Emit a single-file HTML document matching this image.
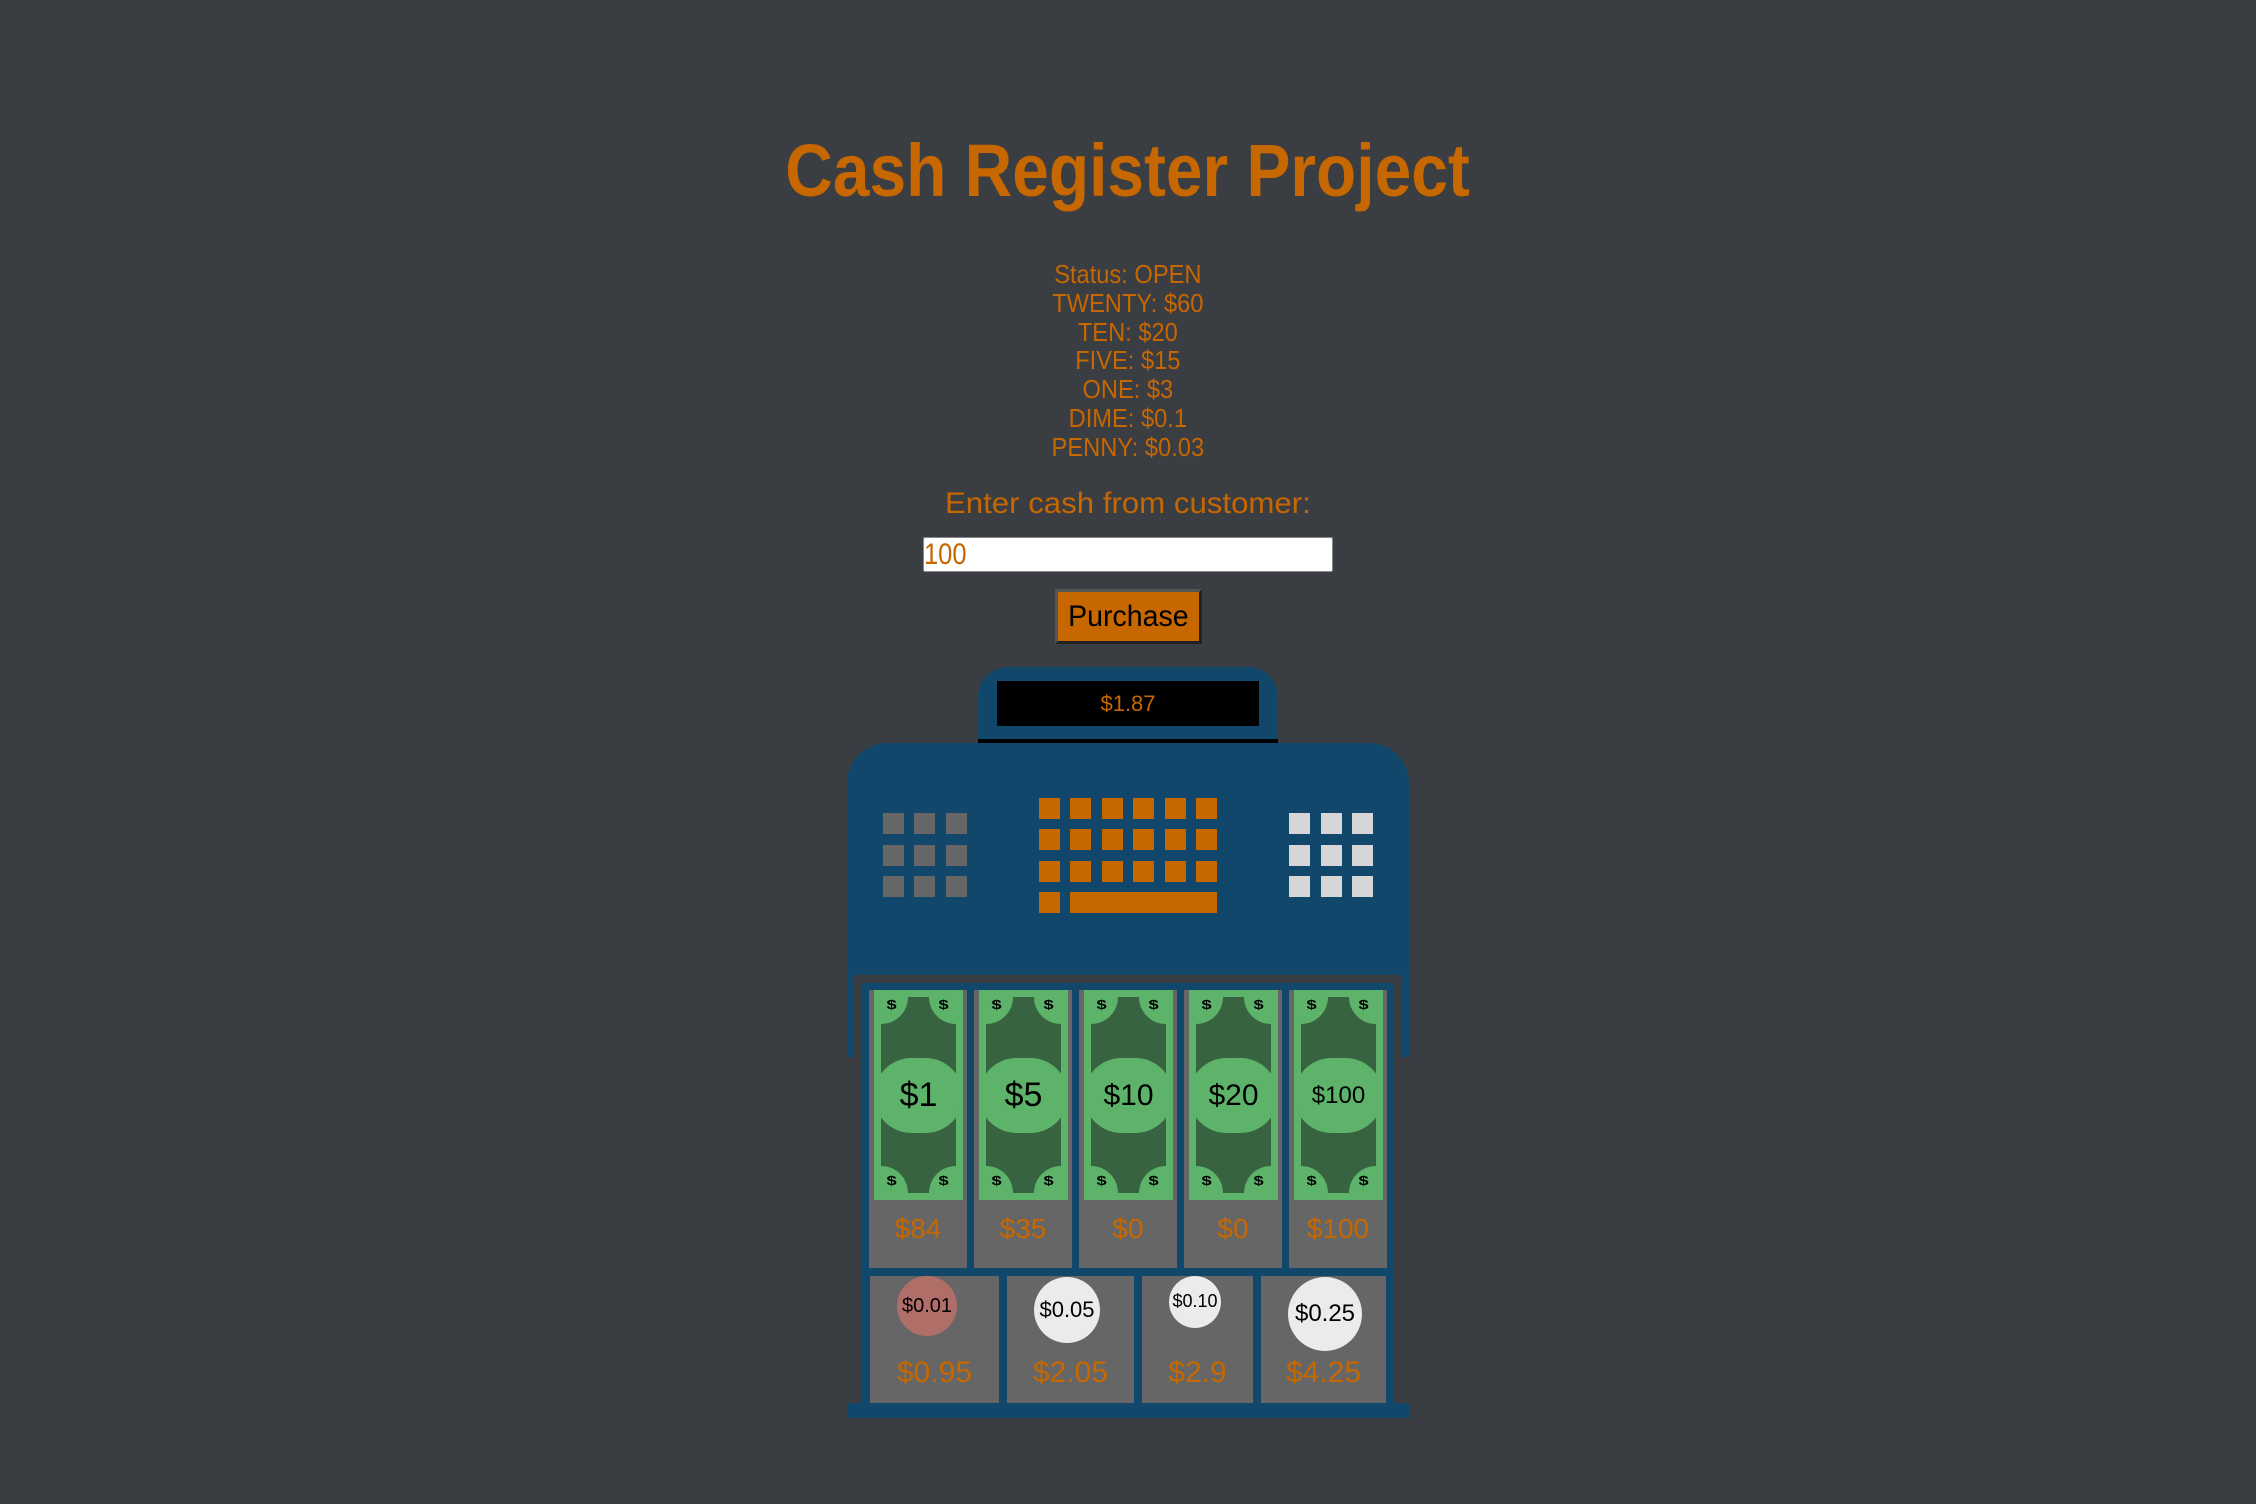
<!DOCTYPE html>
<html><head><meta charset="utf-8"><style>
*{margin:0;padding:0;box-sizing:border-box}
body{width:2256px;height:1504px;background:#3a3d42;position:relative;overflow:hidden;font-family:"Liberation Sans",sans-serif;color:#c76700}
.a{position:absolute}
.c{position:absolute;left:0;width:2256px;text-align:center;white-space:nowrap}
.c span{display:inline-block}
.k{position:absolute;width:21px;height:21px}
.slot{position:absolute;background:#666;top:990px;width:98px;height:278px}
.bill{position:absolute;left:5px;top:0;width:89px;height:210px;background:#5db36a;overflow:hidden}
.inner{position:absolute;left:7px;top:7px;width:75px;height:196px;background:#386340;overflow:hidden}
.cr{position:absolute;width:54px;height:54px;border-radius:50%;background:#5db36a}
.ov{position:absolute;left:0;top:68px;width:89px;height:75px;border-radius:38px;background:#5db36a;text-align:center;line-height:75px;color:#000;font-size:34px}
.ds{position:absolute;font-size:13px;color:#000;font-weight:bold;transform:scaleX(1.4)}
.lab{position:absolute;left:0;width:98px;top:224px;text-align:center;font-size:28px;line-height:30px;color:#c76700}
.cs{position:absolute;background:#666;top:1276px;height:127px}
.coin{position:absolute;border-radius:50%;text-align:center;color:#000}
.cl{position:absolute;left:0;right:0;top:81px;text-align:center;font-size:30px;line-height:32px;color:#c76700}
</style></head><body>
<div class="c" style="top:126px;font-size:74px;font-weight:bold;line-height:90px"><span style="transform:scaleX(0.89)">Cash Register Project</span></div>
<div class="c" style="top:260px;font-size:26px;line-height:28.8px"><span style="transform:scaleX(0.91)">Status: OPEN<br>TWENTY: $60<br>TEN: $20<br>FIVE: $15<br>ONE: $3<br>DIME: $0.1<br>PENNY: $0.03</span></div>
<div class="c" style="top:487px;font-size:30px;line-height:34px"><span style="transform:scaleX(1.04)">Enter cash from customer:</span></div>
<div class="a" style="left:923px;top:537px;width:410px;height:35px;background:#fff;border:1px solid #888;border-radius:2px;font-size:30px;line-height:33px"><span style="display:inline-block;transform:scaleX(0.85);transform-origin:left">100</span></div>
<div class="a" style="left:1055px;top:589px;width:147px;height:55px;background:#c76700;border:3px solid #222;border-top-color:#555;border-left-color:#555;color:#000;font-size:30px;line-height:49px;text-align:center"><span style="display:inline-block;transform:scaleX(0.95)">Purchase</span></div>

<div class="a" style="left:978px;top:667px;width:300px;height:76px;background:#11476a;border-radius:30px 30px 0 0;border-bottom:4px solid #000"></div>
<div class="a" style="left:997px;top:681px;width:262px;height:45px;background:#000;color:#c76700;font-size:22px;line-height:45px;text-align:center">$1.87</div>
<div class="a" style="left:847px;top:743px;width:562px;height:314px;background:#11476a;border-radius:40px 40px 0 0"></div>
<div class="a" style="left:854px;top:975px;width:548px;height:82px;background:#3a3d42"></div>
<div class="a" style="left:862px;top:983px;width:532px;height:425px;background:#11476a"></div>
<div class="a" style="left:847px;top:1403px;width:562px;height:15px;background:#11476a"></div>

<!-- keys -->
<div class="k" style="left:883px;top:813px;background:#666"></div><div class="k" style="left:914px;top:813px;background:#666"></div><div class="k" style="left:946px;top:813px;background:#666"></div>
<div class="k" style="left:883px;top:845px;background:#666"></div><div class="k" style="left:914px;top:845px;background:#666"></div><div class="k" style="left:946px;top:845px;background:#666"></div>
<div class="k" style="left:883px;top:876px;background:#666"></div><div class="k" style="left:914px;top:876px;background:#666"></div><div class="k" style="left:946px;top:876px;background:#666"></div>
<div class="k" style="left:1289px;top:813px;background:#d6d6d6"></div><div class="k" style="left:1321px;top:813px;background:#d6d6d6"></div><div class="k" style="left:1352px;top:813px;background:#d6d6d6"></div>
<div class="k" style="left:1289px;top:845px;background:#d6d6d6"></div><div class="k" style="left:1321px;top:845px;background:#d6d6d6"></div><div class="k" style="left:1352px;top:845px;background:#d6d6d6"></div>
<div class="k" style="left:1289px;top:876px;background:#d6d6d6"></div><div class="k" style="left:1321px;top:876px;background:#d6d6d6"></div><div class="k" style="left:1352px;top:876px;background:#d6d6d6"></div>
<div class="a" style="left:1039px;top:798px;width:178px;height:116px;background:
linear-gradient(90deg,#c76700 0 21px,transparent 21px 31px,#c76700 31px 52px,transparent 52px 63px,#c76700 63px 84px,transparent 84px 94px,#c76700 94px 115px,transparent 115px 126px,#c76700 126px 147px,transparent 147px 157px,#c76700 157px 178px) 0 0/178px 21px no-repeat,
linear-gradient(90deg,#c76700 0 21px,transparent 21px 31px,#c76700 31px 52px,transparent 52px 63px,#c76700 63px 84px,transparent 84px 94px,#c76700 94px 115px,transparent 115px 126px,#c76700 126px 147px,transparent 147px 157px,#c76700 157px 178px) 0 31px/178px 21px no-repeat,
linear-gradient(90deg,#c76700 0 21px,transparent 21px 31px,#c76700 31px 52px,transparent 52px 63px,#c76700 63px 84px,transparent 84px 94px,#c76700 94px 115px,transparent 115px 126px,#c76700 126px 147px,transparent 147px 157px,#c76700 157px 178px) 0 63px/178px 21px no-repeat,
linear-gradient(90deg,#c76700 0 21px,transparent 21px 31px,#c76700 31px 178px) 0 94px/178px 21px no-repeat"></div>

<!-- bills -->
<div class="slot" style="left:869px"><div class="bill"><div class="inner"><div class="cr" style="left:-27px;top:-27px"></div><div class="cr" style="left:48px;top:-27px"></div><div class="cr" style="left:-27px;top:169px"></div><div class="cr" style="left:48px;top:169px"></div></div><span class="ds" style="left:14px;top:7px">$</span><span class="ds" style="left:66px;top:7px">$</span><span class="ds" style="left:14px;top:183px">$</span><span class="ds" style="left:66px;top:183px">$</span><div class="ov">$1</div></div><div class="lab">$84</div></div>
<div class="slot" style="left:974px"><div class="bill"><div class="inner"><div class="cr" style="left:-27px;top:-27px"></div><div class="cr" style="left:48px;top:-27px"></div><div class="cr" style="left:-27px;top:169px"></div><div class="cr" style="left:48px;top:169px"></div></div><span class="ds" style="left:14px;top:7px">$</span><span class="ds" style="left:66px;top:7px">$</span><span class="ds" style="left:14px;top:183px">$</span><span class="ds" style="left:66px;top:183px">$</span><div class="ov">$5</div></div><div class="lab">$35</div></div>
<div class="slot" style="left:1079px"><div class="bill"><div class="inner"><div class="cr" style="left:-27px;top:-27px"></div><div class="cr" style="left:48px;top:-27px"></div><div class="cr" style="left:-27px;top:169px"></div><div class="cr" style="left:48px;top:169px"></div></div><span class="ds" style="left:14px;top:7px">$</span><span class="ds" style="left:66px;top:7px">$</span><span class="ds" style="left:14px;top:183px">$</span><span class="ds" style="left:66px;top:183px">$</span><div class="ov" style="font-size:30px">$10</div></div><div class="lab">$0</div></div>
<div class="slot" style="left:1184px"><div class="bill"><div class="inner"><div class="cr" style="left:-27px;top:-27px"></div><div class="cr" style="left:48px;top:-27px"></div><div class="cr" style="left:-27px;top:169px"></div><div class="cr" style="left:48px;top:169px"></div></div><span class="ds" style="left:14px;top:7px">$</span><span class="ds" style="left:66px;top:7px">$</span><span class="ds" style="left:14px;top:183px">$</span><span class="ds" style="left:66px;top:183px">$</span><div class="ov" style="font-size:30px">$20</div></div><div class="lab">$0</div></div>
<div class="slot" style="left:1289px"><div class="bill"><div class="inner"><div class="cr" style="left:-27px;top:-27px"></div><div class="cr" style="left:48px;top:-27px"></div><div class="cr" style="left:-27px;top:169px"></div><div class="cr" style="left:48px;top:169px"></div></div><span class="ds" style="left:14px;top:7px">$</span><span class="ds" style="left:66px;top:7px">$</span><span class="ds" style="left:14px;top:183px">$</span><span class="ds" style="left:66px;top:183px">$</span><div class="ov" style="font-size:24px">$100</div></div><div class="lab">$100</div></div>

<!-- coins -->
<div class="cs" style="left:870px;width:129px"><div class="coin" style="left:27px;top:0px;width:60px;height:60px;background:#b06e68;line-height:60px;font-size:20px">$0.01</div><div class="cl">$0.95</div></div>
<div class="cs" style="left:1007px;width:127px"><div class="coin" style="left:27px;top:1px;width:66px;height:66px;background:#ebebeb;line-height:66px;font-size:22px">$0.05</div><div class="cl">$2.05</div></div>
<div class="cs" style="left:1142px;width:111px"><div class="coin" style="left:27px;top:0px;width:52px;height:52px;background:#ebebeb;line-height:50px;font-size:18px">$0.10</div><div class="cl">$2.9</div></div>
<div class="cs" style="left:1261px;width:125px"><div class="coin" style="left:27px;top:1px;width:74px;height:74px;background:#ebebeb;line-height:74px;font-size:24px">$0.25</div><div class="cl">$4.25</div></div>
</body></html>
